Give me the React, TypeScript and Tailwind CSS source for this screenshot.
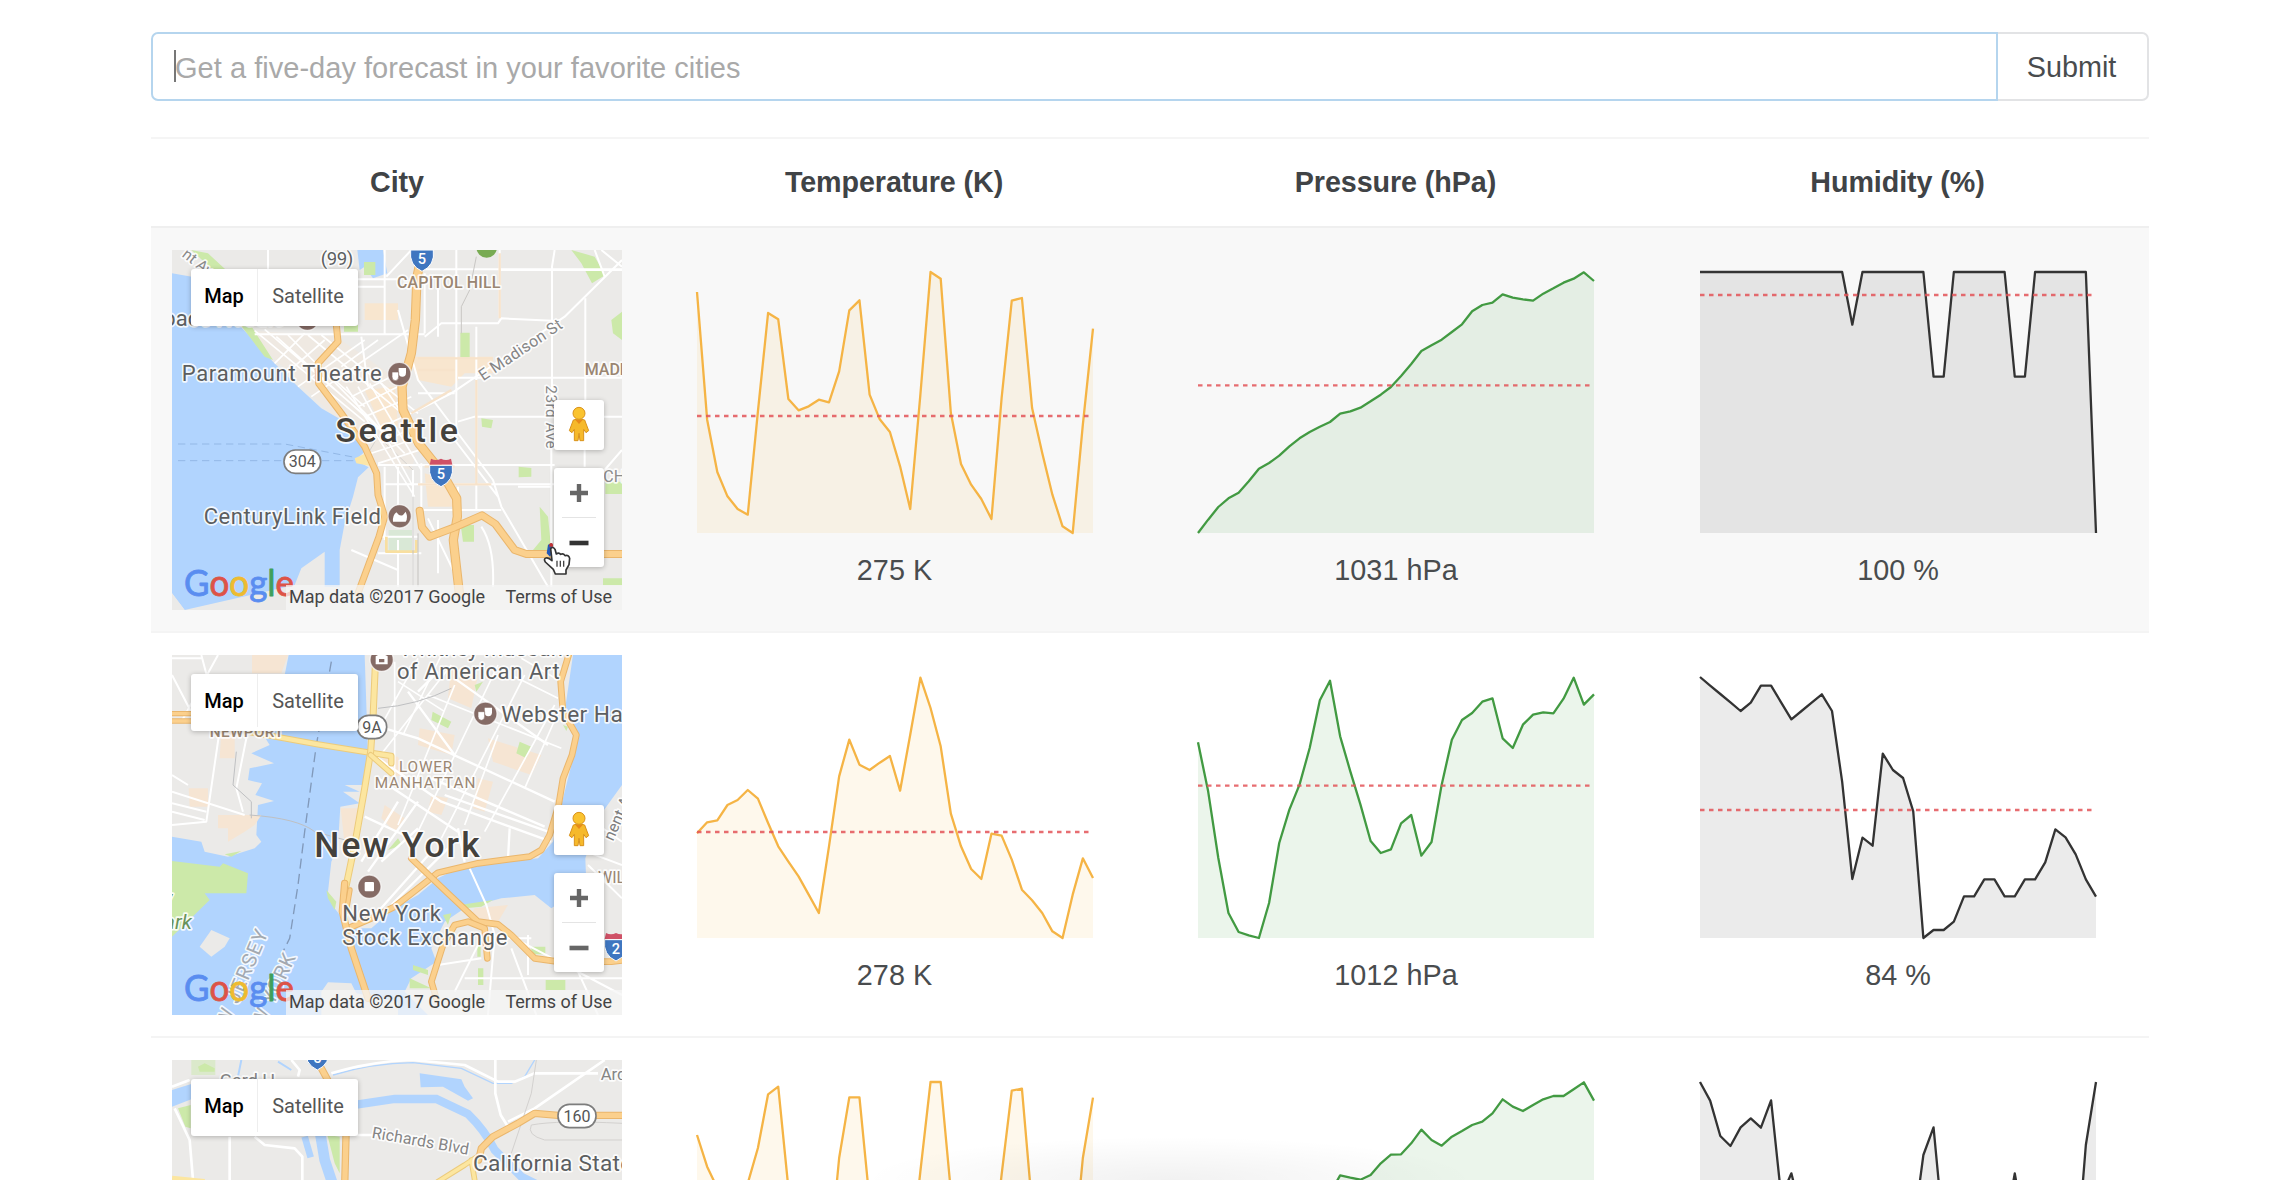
import React from "react";

const SANS = "font-['Liberation_Sans',Arial,sans-serif]";

/* ---------- sparkline data: distance from the top of the plot, 0..783 ---------- */

type Series = { values: number[]; mean: number };
type Kind = "temperature" | "pressure" | "humidity";

const BASE = 52;

const seattle: Record<Kind, Series> = {
  temperature: {
    mean: 484,
    values: [112, 495, 652, 725, 763, 780, 470, 175, 194, 433, 467, 455, 435, 443, 350, 167, 137, 420, 494, 532, 635, 763, 420, 52, 72, 475, 628, 690, 733, 793, 430, 138, 130, 460, 595, 720, 815, 835, 510, 222],
  },
  pressure: {
    mean: 392,
    values: [835, 795, 757, 731, 714, 680, 642, 625, 603, 575, 551, 532, 516, 502, 477, 470, 459, 440, 420, 397, 364, 328, 289, 272, 255, 232, 209, 170, 151, 144, 119, 129, 134, 138, 117, 101, 84, 72, 53, 79],
  },
  humidity: {
    mean: 121,
    values: [52, 52, 52, 52, 52, 52, 52, 52, 52, 52, 52, 52, 52, 52, 52, 210, 52, 52, 52, 52, 52, 52, 52, 366, 366, 52, 52, 52, 52, 52, 52, 366, 366, 52, 52, 52, 52, 52, 52, 835],
  },
};

const newYork: Record<Kind, Series> = {
  temperature: {
    mean: 517,
    values: [521, 488, 482, 436, 421, 391, 417, 490, 560, 606, 650, 705, 760, 560, 350, 240, 315, 331, 309, 289, 393, 225, 54, 145, 260, 462, 560, 628, 658, 522, 528, 600, 690, 722, 760, 815, 835, 705, 596, 655],
  },
  pressure: {
    mean: 378,
    values: [248, 395, 595, 760, 817, 827, 835, 730, 550, 450, 375, 265, 122, 63, 230, 335, 435, 544, 580, 569, 491, 466, 588, 547, 375, 240, 181, 160, 126, 116, 236, 265, 195, 165, 158, 161, 117, 54, 135, 104],
  },
  humidity: {
    mean: 451,
    values: [52, 78, 103, 128, 154, 129, 78, 78, 129, 179, 154, 129, 104, 154, 366, 658, 534, 558, 282, 331, 355, 455, 835, 811, 811, 786, 710, 710, 659, 659, 710, 710, 659, 659, 608, 509, 533, 584, 659, 711],
  },
};

const sacramento: Record<Kind, Series> = {
  temperature: {
    mean: 520,
    values: [211, 306, 370, 600, 600, 356, 250, 89, 66, 370, 600, 700, 800, 600, 280, 98, 98, 410, 600, 700, 800, 600, 320, 52, 52, 380, 600, 700, 800, 600, 330, 78, 72, 425, 600, 700, 835, 600, 280, 99],
  },
  pressure: {
    mean: 450,
    values: [835, 800, 780, 750, 720, 690, 660, 620, 580, 560, 520, 480, 430, 386, 332, 339, 345, 331, 296, 270, 269, 236, 195, 226, 243, 216, 199, 181, 171, 146, 104, 126, 139, 121, 104, 94, 94, 74, 53, 108],
  },
  humidity: {
    mean: 520,
    values: [52, 108, 214, 244, 188, 161, 189, 107, 396, 326, 450, 600, 700, 835, 700, 600, 500, 500, 700, 700, 600, 500, 271, 188, 510, 600, 600, 600, 600, 500, 500, 326, 500, 600, 700, 700, 700, 620, 241, 52],
  },
};

const LINE: Record<Kind, string> = {
  temperature: "#f5b445",
  pressure: "#429a42",
  humidity: "#333333",
};
const FILL: Record<Kind, string> = {
  temperature: "#f5a011",
  pressure: "#008000",
  humidity: "#000000",
};

function Sparkline({ kind, series }: { kind: Kind; series: Series }) {
  const pts = series.values.map((v, i) => `${((i * 396) / 39).toFixed(2)},${((v - BASE) / 3).toFixed(2)}`);
  const mean = (series.mean - BASE) / 3;
  return (
    <svg className="block h-[261px] w-[396px] overflow-visible" viewBox="0 0 396 261">
      <polygon points={`0,261 ${pts.join(" ")} 396,261`} fill={FILL[kind]} fillOpacity={0.08} />
      <polyline points={pts.join(" ")} fill="none" stroke={LINE[kind]} strokeWidth={2.3} strokeLinejoin="round" />
      <line x1={0} x2={396} y1={mean} y2={mean} stroke="#e35358" strokeOpacity={0.85} strokeWidth={2.4} strokeDasharray="4.5 4.5" />
    </svg>
  );
}

/* ---------- map drawing helpers ---------- */

const WATER = "#b1d4fe";
const LAND = "#ebeae8";
const PARK = "#cce9a9";

function Road({ d, w = 20, color = "#fbd08d", edge = "#eab66c" }: { d: string; w?: number; color?: string; edge?: string }) {
  return (
    <g fill="none" strokeLinejoin="round" strokeLinecap="round">
      <path d={d} stroke={edge} strokeWidth={w + 4} />
      <path d={d} stroke={color} strokeWidth={w - 2} />
    </g>
  );
}

function Streets({ d, w = 6, color = "#ffffff" }: { d: string; w?: number; color?: string }) {
  return <path d={d} fill="none" stroke={color} strokeWidth={w} strokeLinejoin="round" />;
}

type LabelProps = {
  x: number;
  y: number;
  size?: number;
  len?: number;
  fill?: string;
  weight?: number;
  rotate?: number;
  halo?: number;
  italic?: boolean;
  children: string;
};

function Label({ x, y, size = 66, len, fill = "#5c5e60", weight = 400, rotate = 0, halo = 10, italic, children }: LabelProps) {
  return (
    <text
      x={x}
      y={y}
      fontSize={size}
      fontWeight={weight}
      fontStyle={italic ? "italic" : "normal"}
      textLength={len}
      fill={fill}
      stroke="#ffffff"
      strokeOpacity={0.85}
      strokeWidth={halo}
      strokeLinejoin="round"
      paintOrder="stroke"
      transform={rotate ? `rotate(${rotate} ${x} ${y})` : undefined}
      fontFamily="Roboto, sans-serif"
    >
      {children}
    </text>
  );
}

function Interstate({ x, y, text = "5" }: { x: number; y: number; text?: string }) {
  return (
    <g transform={`translate(${x} ${y})`}>
      <path d="M-30,-44 Q-15,-36 0,-44 Q15,-36 30,-44 L34,-26 L-34,-26 Z" fill="#cf5166" />
      <path d="M-34,-24 L34,-24 Q40,22 0,40 Q-40,22 -34,-24 Z" fill="#3f76c0" stroke="#ffffff" strokeWidth={3} />
      <text x={0} y={18} textAnchor="middle" fontSize={44} fontWeight={500} fill="#ffffff" fontFamily="Roboto, sans-serif">
        {text}
      </text>
    </g>
  );
}

function RouteBadge({ x, y, w, text }: { x: number; y: number; w: number; text: string }) {
  return (
    <g>
      <rect x={x - w / 2} y={y - 35} width={w} height={70} rx={34} fill="#ffffff" stroke="#7d7d7d" strokeWidth={5} />
      <text x={x} y={y + 17} textAnchor="middle" fontSize={48} fill="#555555" fontFamily="Roboto, sans-serif">
        {text}
      </text>
    </g>
  );
}

function Poi({ x, y, shape }: { x: number; y: number; shape: "masks" | "stadium" | "square" | "museum" }) {
  return (
    <g transform={`translate(${x} ${y})`}>
      <circle r={35} fill="#856b65" stroke="#ffffff" strokeOpacity={0.7} strokeWidth={4} />
      {shape === "masks" && (
        <g fill="#ffffff">
          <path d="M-2,-18 h22 v14 q0,12 -11,12 q-11,0 -11,-12 z" />
          <path d="M-22,-6 h20 v14 q0,12 -10,12 q-10,0 -10,-12 z" stroke="#856b65" strokeWidth={2} />
        </g>
      )}
      {shape === "stadium" && <path d="M-20,16 Q-22,-2 -10,-12 Q0,2 10,-4 L18,-14 Q26,4 18,16 Z" fill="#ffffff" />}
      {shape === "square" && <rect x={-14} y={-14} width={28} height={28} rx={3} fill="#ffffff" />}
      {shape === "museum" && <path d="M-18,-10 L0,-20 L18,-10 V14 H-18 Z M-8,-2 V8 H8 V-2 Z" fill="#ffffff" fillRule="evenodd" />}
    </g>
  );
}

/* ---------- the three maps, drawn in a 1350 x 1080 space at (22, 30) ---------- */

function SeattleMap() {
  return (
    <>
      <rect x={22} y={30} width={1350} height={1080} fill={LAND} />
      <path d="M240,270 L515,290 L700,420 L760,620 L740,690 L620,660 L540,560 Z" fill="#efe9e2" />
      <path d="M730,350 H985 V400 H900 L860,440 L760,420 Z M600,450 L690,440 L700,560 L650,560 Z M780,700 L850,720 L870,800 L790,800 Z M600,190 H700 V240 H600 Z" fill="#f8e6cf" />
      <path d="M22,100 L90,112 L130,165 L240,272 L325,365 L400,440 L470,505 L540,545 L600,635 L572,660 L612,682 L580,712 L565,770 L540,850 L525,930 L525,1040 L480,1040 L480,935 L410,985 L390,1035 L60,1110 L22,1060 Z" fill={WATER} />
      <path d="M578,30 H655 L668,100 L625,115 L600,80 L585,90 Z" fill={WATER} />
      <path d="M22,1060 L60,1110 H22 Z" fill={LAND} />
      <path d="M80,30 L130,40 L190,95 L150,95 Z M230,258 L262,262 L325,360 L300,350 Z M598,66 H632 V105 H598 Z M538,255 H580 V275 H538 Z M887,278 H915 V352 H887 Z M1220,30 L1290,50 L1322,105 L1282,130 L1250,70 Z M1340,240 L1372,215 V300 L1345,280 Z M1062,680 L1100,684 V710 L1062,712 Z M1322,725 H1372 V762 H1322 Z M888,855 H928 V905 H895 Z M1125,800 L1150,830 L1160,930 H1105 L1130,900 Z M1315,1015 H1372 V1036 H1315 Z M950,535 L985,540 L980,565 L952,560 Z" fill={PARK} />
      <path d="M672,870 H745 V935 H672 Z" fill="#d9e8d6" />
      <circle cx={966} cy={22} r={31} fill="#78ab52" />
      <g stroke="#93b8e6" strokeWidth={3} strokeDasharray="22 14" fill="none">
        <path d="M40,612 H360 L570,652" />
        <path d="M40,662 H570" />
      </g>
      <path d="M610,560 L745,690 M640,590 L610,640" stroke="#d5d3d0" strokeWidth={3} />
      <Streets w={5} d="M270,272 L600,545 M300,268 L640,560 M335,290 L680,600 M370,285 L720,640 M430,285 L760,560 M470,285 L760,520 M330,370 L420,280 M365,400 L480,300 M400,440 L600,300 M440,470 L730,270 M510,420 L600,500 M530,380 L640,300" />
      <Streets w={5} d="M545,440 L750,770 M580,440 L745,740 M615,430 L770,690 M650,430 L740,560 M560,470 L700,400 M580,500 L720,430 M600,530 L740,470 M630,570 L760,510 M650,610 L770,550 M620,640 L770,590 M640,670 L780,625" />
      <Streets w={6} d="M310,30 V90 M660,30 V280 M580,140 H660 M580,118 H700 M665,110 L740,30 M780,100 V280 M820,120 V290 M875,30 V590 M1005,30 V235 M1170,30 L1162,80 V480 M1262,175 V490 M270,283 H780 M780,290 L830,250 H1000 L1010,235 L1180,243 M770,88 H1372 M1165,90 H1372 M880,413 H1372 M880,545 L930,530 H1372 M640,675 H1170 M660,733 H1170 M935,260 V810 M770,810 H1010 M1160,620 V1040" />
      <Streets w={6} d="M1372,60 L1200,230 L860,460 L740,520 M1372,80 L1310,30 M590,290 L610,440 M700,210 L760,420 L985,720 L1010,800 L1150,1040 M745,690 V1040 M770,670 V860 M660,680 V900 M820,840 V1000 M700,680 V860 M870,600 L1000,770 M640,890 H760 M640,940 H770 M790,835 L870,1000 M950,860 Q990,920 985,1040 M1005,90 H1165 M1320,690 L1372,630 M760,460 H870 M1290,30 L1320,110 M1260,530 V680 M880,740 V790 M1060,740 H1160 M560,930 L700,990 M700,900 V1040" />
      <Streets w={8} color="#f8dfa0" d="M665,890 V935 H755 V900" />
      <Streets w={7} color="#f7e3cb" d="M760,355 H985 M760,390 H870 M935,420 V730 M780,680 H870 M740,520 L860,450 M1005,40 V235 M760,733 H980" />
      <path d="M935,50 L915,150 L890,200 V280" stroke="#c9c7c4" strokeWidth={3} fill="none" />
      <path d="M745,770 V1040 M760,1040 V880" stroke="#c4c2bf" strokeWidth={3} fill="none" />
      <path d="M570,655 L605,640 L618,678 L575,670 Z" fill="#fbe6a8" />
      <Road w={17} d="M515,255 L520,305 L460,370 L462,430 L530,520 L600,620 L636,700 L640,765 L660,830 L643,890 L580,1060" />
      <Road w={24} d="M768,60 L757,110 L752,240 L740,340 L712,440 L715,510 L762,610 L830,695 L876,775 L878,830 L866,900 L884,1060" />
      <Road w={20} d="M765,812 L772,862 L795,890 L870,862 L952,826 L992,852 L1050,930 L1085,942 H1380" />
      <Interstate x={772} y={54} />
      <Interstate x={829} y={700} />
      <RouteBadge x={413} y={665} w={110} text="304" />
      <Label x={468} y={76} size={56} len={98}>(99)</Label>
      <Label x={50} y={48} size={46} rotate={38} fill="#8a8a8a">nt Av</Label>
      <Label x={-4} y={257} size={66}>pace Needle</Label>
      <Poi x={428} y={236} shape="square" />
      <Label x={697} y={143} size={48} len={310} fill="#9a8672" weight={500}>CAPITOL HILL</Label>
      <Label x={1260} y={405} size={48} fill="#9a8672" weight={500}>MADRONA</Label>
      <Label x={1316} y={725} size={48} fill="#8d8d8d">CHERRY</Label>
      <Label x={956} y={424} size={48} len={290} rotate={-34} fill="#858585">E Madison St</Label>
      <Label x={1143} y={436} size={46} len={190} rotate={90} fill="#858585">23rd Ave</Label>
      <Label x={51} y={424} len={600}>Paramount Theatre</Label>
      <Poi x={704} y={402} shape="masks" />
      <Label x={117} y={851} len={532}>CenturyLink Field</Label>
      <Poi x={705} y={829} shape="stadium" />
      <Label x={512} y={606} size={102} len={368} weight={500} fill="#44413c">Seattle</Label>
    </>
  );
}

function NewYorkMap() {
  return (
    <>
      <rect x={22} y={30} width={1350} height={1080} fill={WATER} />
      <path d="M22,30 H372 L360,90 L290,260 L315,300 L260,325 L328,355 L255,370 L250,405 L292,415 L272,450 L328,468 L280,480 L275,570 L290,590 L270,610 L190,635 L120,620 L110,590 L22,575 Z" fill={LAND} />
      <path d="M600,30 H1225 L1200,200 L1240,280 L1215,380 L1190,480 L1165,590 L1120,640 L890,665 L820,700 L760,750 L690,790 L620,850 L555,850 L510,790 L490,740 L500,650 L520,600 L527,485 L585,475 L535,440 L585,440 L540,420 L600,420 L610,330 Z" fill={LAND} />
      <path d="M1372,420 L1300,520 L1262,640 L1265,720 L1160,790 L1110,750 L1010,760 L900,790 L840,830 L800,910 L815,950 L740,1000 L720,1040 L790,1110 H1372 Z" fill={LAND} />
      <path d="M470,1040 L490,1012 L560,1015 L575,1045 L700,1070 V1110 H470 Z" fill={LAND} />
      <path d="M262,30 H370 L350,85 H262 Z M170,255 H210 V340 H165 Z M160,510 H290 L270,540 L240,560 L190,590 L190,550 H160 Z M72,430 H130 V485 H75 Z M528,490 L580,490 L570,590 L540,600 Z M650,330 L700,335 L720,390 L680,395 Z M765,250 L870,270 L860,330 L760,300 Z M970,280 L1130,330 L1100,390 L985,350 Z M930,790 L1030,780 L1000,830 L900,840 Z M800,450 L850,460 L830,510 L790,500 Z M940,400 L985,410 L960,500 L925,490 Z M660,480 L720,520 L690,560 L650,520 Z M860,60 L940,90 L920,190 L850,160 Z" fill="#f6e5d3" />
      <path d="M22,648 L165,665 L175,655 L250,685 L245,745 L120,745 L135,765 L22,875 Z M804,200 L860,230 L850,250 L800,225 Z M1065,290 L1100,305 L1085,340 L1055,325 Z M930,120 L955,110 L935,140 Z M670,615 L700,580 L712,600 Z M485,735 L515,770 L510,795 L490,760 Z M1100,905 H1142 V928 H1100 Z M1143,1005 H1202 V1035 H1143 Z M938,900 H948 V935 H938 Z M940,970 H956 V1020 H940 Z M735,1000 L800,1030 H735 Z M745,960 L790,975 V990 L745,975 Z M835,810 L860,805 L850,840 Z M1195,240 L1210,245 L1205,258 Z M885,780 L985,765 L950,785 L900,790 Z M180,628 L230,618 L200,635 Z" fill={PARK} />
      <path d="M105,905 L140,855 L195,880 L180,905 L140,935 Z" fill={LAND} />
      <Streets w={6} d="M22,40 H110 M110,30 L160,220 M160,30 L50,230 M22,90 L100,240 M165,255 L125,530 L22,540 M245,280 L215,430 L235,500 M22,440 L240,510 M22,390 L70,420 M22,475 L125,500 M22,500 L120,525" />
      <Streets w={5} d="M645,250 L760,40 M640,340 L860,60 M700,540 L870,120 M760,560 L1000,60 M830,580 L1080,90 M900,540 L1000,270 M960,560 L1170,180 M690,420 L690,50 M715,270 L830,30 M1080,430 L1190,180 M1180,160 L1040,90 M700,110 L840,200 M790,150 L1190,310 M1070,40 L1190,110" />
      <Streets w={7} d="M640,340 L830,470 L1160,590 M660,250 L760,280 L1170,470 M840,450 L1150,560 M800,400 L1140,545 M730,140 L870,330 M870,100 L1150,300 M600,515 L750,585 M640,400 L880,560 M650,650 L760,550 M610,680 L760,470 M590,650 L700,470 M680,780 L850,610 M640,800 L800,620 M880,550 L900,650 M1035,550 L1030,640 M760,140 L820,80" />
      <Streets w={6} d="M915,670 L965,780 L990,870 L970,1110 M1040,910 L1115,1110 M1265,620 L1372,660 M1270,660 L1372,760 M1300,540 L1372,590 M1050,1000 H1372 M1090,870 V990 M1050,880 L1372,1050 M870,1040 L960,860 M900,1000 H1080 M1240,980 L1300,1110 M820,960 L950,940 M1000,880 H1100 M1300,760 V830" />
      <path d="M500,50 L455,300 L420,560 L400,720 L375,880 L350,930" stroke="#8199ba" strokeWidth={4} strokeDasharray="30 16" fill="none" />
      <path d="M640,190 Q760,180 860,130 M255,510 Q400,520 450,560 L560,590 M215,320 L205,420 L260,470 V520" stroke="#bfc0c2" strokeWidth={3} fill="none" />
      <Road w={12} d="M22,206 H78 M22,228 H78" />
      <Road w={15} color="#fce6a0" edge="#eccb7c" d="M260,262 L460,298 L610,322 L680,333 V355" />
      <Road w={17} color="#fce6a0" edge="#eccb7c" d="M632,60 L625,220 L618,320 L600,430 L570,600 L545,720" />
      <Road w={14} color="#fce6a0" edge="#eccb7c" d="M618,330 L680,385" />
      <Road w={16} d="M1212,30 L1188,110 L1195,200 L1235,270 L1222,330 L1195,400 L1182,480 L1155,570 L1130,615 L1095,635 L940,655 L820,683 L760,730 L690,785 L620,820 L550,850" />
      <Road w={18} d="M540,715 L533,800 L560,910 L610,1060" />
      <Road w={12} d="M556,735 L545,800" />
      <Road w={16} d="M740,640 L850,745 L940,830 L1000,838 L1040,870 L1110,940 L1180,950 H1340 L1380,945" />
      <Road w={16} d="M815,1060 L800,1010 L835,900 L870,840 L910,830 L960,850 L968,940" />
      <Label x={135} y={277} size={46} len={222} fill="#9a8672" weight={500}>NEWPORT</Label>
      <RouteBadge x={622} y={246} w={88} text="9A" />
      <Label x={706} y={34} len={510}>Whitney Museum</Label>
      <Label x={697} y={102} len={488}>of American Art</Label>
      <Poi x={651} y={44} shape="museum" />
      <Poi x={962} y={206} shape="masks" />
      <Label x={1010} y={230} size={68} len={400}>Webster Hall</Label>
      <Label x={703} y={381} size={46} len={160} fill="#9a8672">LOWER</Label>
      <Label x={630} y={430} size={46} len={302} fill="#9a8672">MANHATTAN</Label>
      <Label x={449} y={635} size={106} len={496} weight={500} fill="#44413c">New York</Label>
      <Poi x={614} y={725} shape="square" />
      <Label x={533} y={829} len={296}>New York</Label>
      <Label x={533} y={899} len={495}>Stock Exchange</Label>
      <Label x={-4} y={780} size={60} fill="#68925a" italic>y</Label>
      <Label x={-2} y={853} size={62} fill="#68925a" italic>ark</Label>
      <Label x={190} y={1150} size={60} len={310} rotate={-67} fill="#a3a9b0">W JERSEY</Label>
      <Label x={295} y={1150} size={60} len={235} rotate={-65} fill="#a3a9b0">W YORK</Label>
      <Label x={1345} y={590} size={48} rotate={-66} fill="#7d7d7d">nent Ave</Label>
      <Label x={1300} y={714} size={48} fill="#9a8672">WILL</Label>
      <Interstate x={1354} y={908} text="2" />
    </>
  );
}

function SacramentoMap() {
  return (
    <g transform="translate(0 -30)">
      <rect x={22} y={60} width={1350} height={1080} fill={LAND} />
      <path d="M80,60 H152 V105 H80 Z" fill="#dbe9cb" />
      <path d="M100,80 L120,70 L150,85 V95 H105 Z M40,205 L78,195 V265 L62,260 Z M488,285 L525,290 V400 L510,370 Z" fill={PARK} />
      <path d="M22,150 L80,132 V178 L22,200 Z M765,100 L890,118 L900,140 L925,175 L910,182 L835,140 L768,142 Z" fill={WATER} />
      <g fill="none" stroke={WATER}>
        <path d="M560,196 L690,177 H815 L910,222 Q960,270 990,330 L1070,410 L1130,440" strokeWidth={25} />
        <path d="M465,270 L480,360 L510,450" strokeWidth={32} />
        <path d="M420,290 L438,352" strokeWidth={20} />
        <path d="M505,105 Q620,70 745,68 L890,85 L985,130 H1040 L1080,110 L1110,60" strokeWidth={4} />
        <path d="M230,60 L220,110 M340,65 L380,90" strokeWidth={6} />
      </g>
      <Streets w={8} d="M500,100 Q620,64 740,60 L900,75 L1000,125 H1050 L1110,100 H1300" />
      <Streets w={8} d="M992,60 V160 L1008,225 L1030,260 M1030,245 L1110,205 L1320,60 M30,205 L75,300 L85,420 M270,290 L300,315 L390,325 L413,350 V440 M195,290 V440 M380,60 L405,90 L400,110 M22,140 L75,120 M575,285 H640" />
      <path d="M1115,60 L1100,160 L1040,340 M1372,300 H1140 Q1085,285 1100,255 Q1180,240 1372,250" stroke="#d3d1cf" strokeWidth={3} fill="none" />
      <path d="M22,415 L120,425" stroke="#fce6a0" strokeWidth={16} />
      <Road w={13} color="#fce6a0" edge="#eccb7c" d="M820,425 L900,375 L945,345 M930,420 L920,360" />
      <Road w={18} d="M470,85 L500,140 L545,250 L540,440" />
      <Road w={18} d="M1380,226 H1180 L1110,220 L1060,250 L985,290 L950,325 L942,360" />
      <Interstate x={458} y={50} />
      <RouteBadge x={1237} y={228} w={114} text="160" />
      <Label x={165} y={140} size={54} fill="#858585">Gard H</Label>
      <Label x={1308} y={120} size={50} fill="#858585">Arden</Label>
      <g transform="rotate(10 620 290)">
        <Label x={620} y={293} size={48} len={295} fill="#858585">Richards Blvd</Label>
      </g>
      <Label x={925} y={394} size={68} len={478}>California State</Label>
    </g>
  );
}

/* ---------- map widget ---------- */

function Pegman() {
  return (
    <svg className="h-[36px] w-[22px]" viewBox="0 0 66 108">
      <g stroke="#d9921b" strokeWidth={3} strokeLinejoin="round">
        <path d="M16,42 Q33,34 50,42 L62,74 L54,80 L47,70 V104 H36 L33,82 L30,104 H19 V70 L12,80 L4,74 Z" fill="#f6b92b" />
        <circle cx={33} cy={22} r={18} fill="#fac32f" />
      </g>
      <path d="M22,42 L33,54 L44,42" fill="#e88a1a" />
    </svg>
  );
}

function HandCursor() {
  return (
    <svg className="absolute top-[292px] left-[370px] h-[34px] w-[30px]" viewBox="0 0 90 102">
      <path d="M18,8 L30,3 L34,26 L24,44 L14,34 Z" fill="#2458b8" />
      <path d="M22,6 Q28,0 33,7 V14 H22 Z" fill="#c23434" />
      <path
        d="M26,20 Q33,12 39,22 L43,36 Q50,30 56,37 Q64,33 69,41 Q80,37 83,49 L81,68 L72,84 V96 H40 L34,82 L10,60 Q4,50 12,48 Q20,46 30,56 Z"
        fill="#ffffff"
        stroke="#333333"
        strokeWidth={5}
        strokeLinejoin="round"
      />
      <path d="M45,56 V74 M55,56 V74 M65,56 V74" stroke="#444444" strokeWidth={4} />
    </svg>
  );
}

const LOGO: [string, string][] = [
  ["G", "#5a8df0"],
  ["o", "#dd5347"],
  ["o", "#eebb30"],
  ["g", "#5a8df0"],
  ["l", "#3f9f5c"],
  ["e", "#dd5347"],
];

function MapWidget({ drawing, cursor }: { drawing: React.ReactNode; cursor?: boolean }) {
  return (
    <div className="relative h-[360px] w-[450px] overflow-hidden font-[Roboto,sans-serif]">
      <svg className="block h-[360px] w-[450px]" viewBox="22 30 1350 1080">
        {drawing}
        <text
          x={58}
          y={1068}
          fontSize={112}
          textLength={330}
          lengthAdjust="spacingAndGlyphs"
          fontFamily="Lato, sans-serif"
          strokeWidth={2.5}
          strokeLinejoin="round"
        >
          {LOGO.map(([ch, color], i) => (
            <tspan key={i} fill={color} stroke={color}>
              {ch}
            </tspan>
          ))}
        </text>
      </svg>
      <div className="absolute right-0 bottom-0 flex h-[25px] w-[336px] items-center justify-between bg-[#f5f5f5]/75 pr-[10px] pb-[1px] pl-[3px] text-[18px] leading-none whitespace-nowrap text-[#444]">
        <span>Map data ©2017 Google</span>
        <span>Terms of Use</span>
      </div>
      <div className="absolute top-[19px] left-[19px] flex h-[57px] w-[167px] items-center rounded-[3px] bg-white pb-[4px] text-[20px] shadow-[0_1px_5px_rgba(0,0,0,0.25)]">
        <div className="flex h-full w-[67px] items-center justify-center border-r border-[#eeeeee] font-medium text-black">Map</div>
        <div className="flex h-full flex-1 items-center justify-center text-[#565656]">Satellite</div>
      </div>
      <div className="absolute top-[150px] right-[18px] flex h-[50px] w-[50px] items-center justify-center rounded-[3px] bg-white pb-[3px] shadow-[0_1px_5px_rgba(0,0,0,0.25)]">
        <Pegman />
      </div>
      <div className="absolute top-[218px] right-[18px] flex h-[99px] w-[50px] flex-col items-center rounded-[3px] bg-white shadow-[0_1px_5px_rgba(0,0,0,0.25)]">
        <div className="flex h-[49px] items-center">
          <svg className="h-[20px] w-[20px]" viewBox="0 0 20 20">
            <path d="M10 1V19M1 10H19" stroke="#666" strokeWidth={4.4} />
          </svg>
        </div>
        <div className="h-px w-[34px] bg-[#e4e4e4]" />
        <div className="flex h-[49px] items-center">
          <svg className="h-[20px] w-[20px]" viewBox="0 0 20 20">
            <path d="M0.5 10H19.5" stroke={cursor ? "#333" : "#666"} strokeWidth={4.6} />
          </svg>
        </div>
      </div>
      {cursor && <HandCursor />}
    </div>
  );
}

/* ---------- table ---------- */

type CityRow = {
  name: string;
  drawing: React.ReactNode;
  data: Record<Kind, Series>;
  averages: Record<Kind, string>;
};

const CITIES: CityRow[] = [
  {
    name: "Seattle",
    drawing: <SeattleMap />,
    data: seattle,
    averages: { temperature: "275 K", pressure: "1031 hPa", humidity: "100 %" },
  },
  {
    name: "New York",
    drawing: <NewYorkMap />,
    data: newYork,
    averages: { temperature: "278 K", pressure: "1012 hPa", humidity: "84 %" },
  },
  {
    name: "Sacramento",
    drawing: <SacramentoMap />,
    data: sacramento,
    averages: { temperature: "282 K", pressure: "1020 hPa", humidity: "78 %" },
  },
];

const KINDS: Kind[] = ["temperature", "pressure", "humidity"];
const COLS = "grid grid-cols-[493px_501px_502px_502px]";

export default function App() {
  return (
    <div className={`relative h-[1180px] w-full overflow-hidden bg-white pl-[151px] text-[28.8px] text-[#494c4e] ${SANS}`}>
      <div className="w-[1998px] pt-[32px]">
        <form className="flex h-[69px]" onSubmit={(e) => e.preventDefault()}>
          <div className="relative flex-1">
            <input
              className="h-full w-full rounded-l-[7px] border-2 border-[#b5d5ee] bg-white pt-[3px] pl-[22px] text-[29px] tracking-[0.03px] text-[#55595c] outline-none placeholder:text-[#a9a9a9]"
              placeholder="Get a five-day forecast in your favorite cities"
            />
            <span className="absolute top-[18px] left-[23px] h-[32px] w-[2px] bg-[#777]" />
          </div>
          <button className="w-[151px] rounded-r-[7px] border-2 border-l-0 border-[#e2e3e5] bg-white pt-[3px] pr-[2px]">Submit</button>
        </form>

        <div className="mt-[36px]">
          <div className={`${COLS} h-[89px] border-t-2 border-[#f5f5f5] text-[28.7px] font-bold tracking-[-0.08px] text-[#404346]`}>
            {["City", "Temperature (K)", "Pressure (hPa)", "Humidity (%)"].map((title) => (
              <div key={title} className="flex items-center justify-center pt-px pr-px">
                {title}
              </div>
            ))}
          </div>

          {CITIES.map((city, index) => (
            <div key={city.name} className={`${COLS} h-[405px] border-t-2 ${index === 0 ? "border-[#efefef] bg-[#f8f8f8]" : "border-[#f4f4f4] bg-white"}`}>
              <div className="pt-[22px] pl-[21px]">
                <MapWidget drawing={city.drawing} cursor={index === 0} />
              </div>
              {KINDS.map((kind) => (
                <div key={kind} className="flex flex-col items-center pt-[44.3px]">
                  <Sparkline kind={kind} series={city.data[kind]} />
                  <div className="mt-[15px] leading-[44px]">{city.averages[kind]}</div>
                </div>
              ))}
            </div>
          ))}
        </div>
      </div>
      <div className="absolute bottom-0 left-[860px] h-[44px] w-[620px] bg-[radial-gradient(ellipse_at_bottom,rgba(0,0,0,0.055),rgba(0,0,0,0.02)_45%,transparent_70%)]" />
    </div>
  );
}
